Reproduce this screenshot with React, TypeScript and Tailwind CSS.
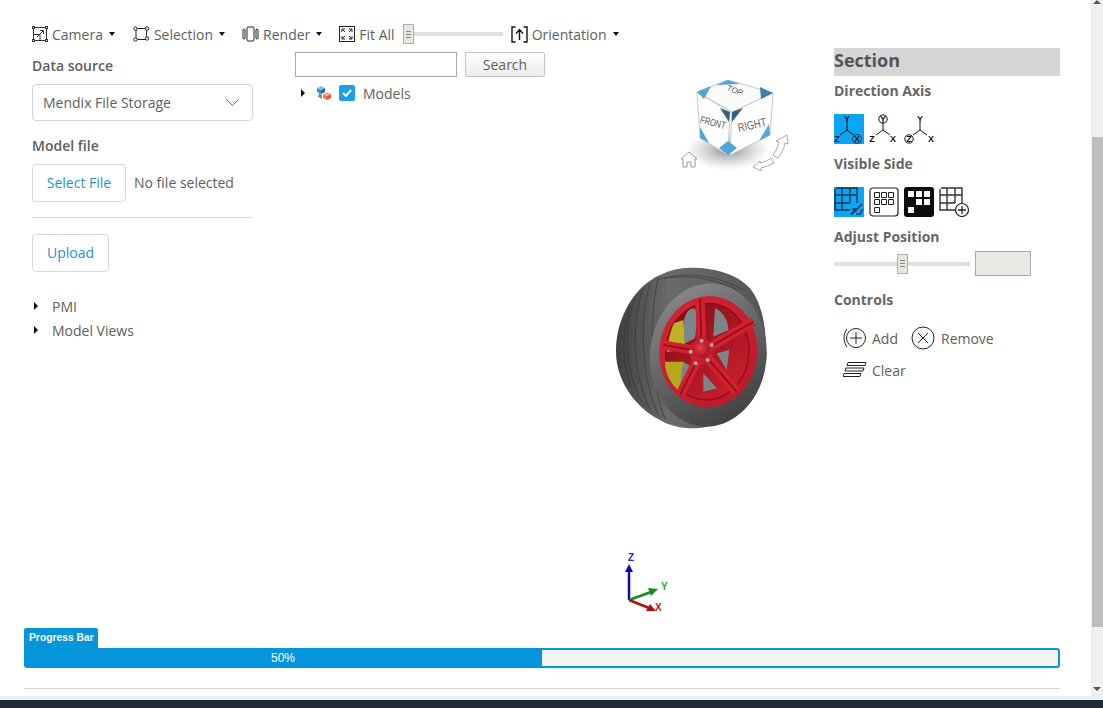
import type { ReactNode } from "react";

// Small black caret used by the toolbar menus
function Caret() {
  return <span className="ml-[6px] inline-block w-0 h-0 border-x-[3.500px] border-x-transparent border-t-[4px] border-t-[#111]" />;
}

function TreeArrow() {
  return <span className="inline-block w-0 h-0 border-y-[4px] border-y-transparent border-l-[4px] border-l-[#111]" />;
}

function ToolItem({ icon, label, caret, className }: { icon: ReactNode; label: string; caret?: boolean; className?: string }) {
  return (
    <div className={`flex items-center ${className ?? ""}`}>
      {icon}
      <span className="ml-[4px]">{label}</span>
      {caret && <Caret />}
    </div>
  );
}

function CameraIcon() {
  return (
    <svg width="16" height="16" viewBox="0 0 16 16" fill="none" stroke="#333" strokeWidth="1">
      <rect x="1.500" y="1.500" width="13" height="13" />
      <rect x="0.500" y="0.500" width="2" height="2" fill="#fff" />
      <rect x="13.500" y="0.500" width="2" height="2" fill="#fff" />
      <rect x="0.500" y="13.500" width="2" height="2" fill="#fff" />
      <rect x="13.500" y="13.500" width="2" height="2" fill="#fff" />
      <path d="M1.500 8.500h6.500v6M5 11l6-6M8 4.500h3.500v3.500" />
    </svg>
  );
}

function SelectionIcon() {
  return (
    <svg width="17" height="16" viewBox="0 0 17 16" fill="none" stroke="#222" strokeWidth="1">
      <path d="M3 2.500h11l-1 11H3z" />
      <circle cx="2.500" cy="2.500" r="1.700" fill="#fff" />
      <circle cx="14" cy="2.500" r="1.700" fill="#fff" />
      <circle cx="14" cy="12.500" r="1.700" fill="#fff" />
      <circle cx="2.500" cy="13.500" r="1.700" fill="#fff" />
    </svg>
  );
}

function RenderIcon() {
  return (
    <svg width="17" height="16" viewBox="0 0 17 16" fill="none" stroke="#222" strokeWidth="1">
      <rect x="5" y="1" width="7" height="14" rx="1" />
      <rect x="1" y="3" width="2" height="10" rx="1" />
      <rect x="14" y="3" width="2" height="10" rx="1" />
    </svg>
  );
}

function FitIcon() {
  return (
    <svg width="16" height="16" viewBox="0 0 16 16" fill="none" stroke="#222" strokeWidth="1">
      <rect x="0.500" y="0.500" width="15" height="15" />
      <path d="M3 6V3h3M3 3l3 3M10 3h3v3M13 3l-3 3M3 10v3h3M3 13l3-3M13 10v3h-3M13 13l-3-3" />
    </svg>
  );
}

function OrientationIcon() {
  return (
    <svg width="17" height="17" viewBox="0 0 17 17" fill="none" stroke="#111" strokeWidth="1.400">
      <path d="M4.500 1H1v15h3.500M12.500 1H16v15h-3.500M8.500 14V4M5 7.500l3.500-4 3.500 4" />
    </svg>
  );
}

function Handle({ className }: { className?: string }) {
  return (
    <div className={`absolute w-[11px] h-[20px] bg-[#e9e5df] border border-[#b5aea8] flex flex-col items-center justify-center gap-[2px] ${className ?? ""}`}>
      <span className="w-[5px] h-px bg-[#8a8a8a]" />
      <span className="w-[5px] h-px bg-[#8a8a8a]" />
      <span className="w-[5px] h-px bg-[#8a8a8a]" />
    </div>
  );
}

function AxisIcon({ active, mark }: { active?: boolean; mark: "x" | "y" | "z" }) {
  const ring = active ? "#1a3a55" : "#111";
  const cx = mark === "y" ? 14 : mark === "z" ? 16 : 13;
  const zx = mark === "z" ? 5 : 3;
  const xx = mark === "z" ? 27 : mark === "y" ? 24 : 23;
  return (
    <svg width="30" height="30" viewBox="0 0 30 30" className={active ? "bg-[#0aa5f5]" : ""} fontFamily="'Liberation Sans', sans-serif" fontSize="9" fontWeight="700" fill="#111">
      <path d={`M${cx} 8v8M${cx} 16l-7 5M${cx} 16l7 5`} stroke="#111" strokeWidth="1" fill="none" />
      {mark === "y" && <circle cx={cx} cy="5" r="4.200" fill="none" stroke={ring} strokeWidth="1" />}
      {mark === "z" && <circle cx={zx} cy="25" r="4.200" fill="none" stroke={ring} strokeWidth="1" />}
      {mark === "x" && <circle cx={xx} cy="25" r="4.500" fill="none" stroke={ring} strokeWidth="1" />}
      <text x={cx} y="8" textAnchor="middle">Y</text>
      <text x={zx} y="28" textAnchor="middle">Z</text>
      <text x={xx} y="28" textAnchor="middle">X</text>
    </svg>
  );
}

function GridBase({ stroke }: { stroke: string }) {
  return (
    <path d="M2 1h21v15M1 2v21h15M1 8h22M1 16h15M8 1v22M16 1v15" fill="none" stroke={stroke} strokeWidth="1.400" />
  );
}

function VisibleIcons() {
  return (
    <div className="flex gap-[5px] mt-[13px] h-[30px]">
      <svg width="30" height="30" viewBox="0 0 30 30" className="bg-[#0aa5f5]">
        <GridBase stroke="#12364f" />
        <path d="M17 28l11-11M18 22h4l-5 5M22 27h4l3-5" fill="none" stroke="#12364f" strokeWidth="1.400" />
      </svg>
      <svg width="30" height="30" viewBox="0 0 30 30" fill="none" stroke="#222">
        <rect x="1" y="1" width="28" height="28" rx="3" strokeWidth="1.200" />
        <path d="M5.500 5.500h5v5h-5zM12.500 5.500h5v5h-5zM19.500 5.500h5v5h-5zM5.500 12.500h5v5h-5zM12.500 12.500h5v5h-5zM19.500 12.500h5v5h-5zM5.500 20.500h5v5h-5z" strokeWidth="1" />
      </svg>
      <svg width="30" height="30" viewBox="0 0 30 30">
        <rect width="30" height="30" rx="3" fill="#0c0c0c" />
        <path d="M4 4h6v6H4zM12 4h6v6h-6zM20 4h6v6h-6zM12 12h6v6h-6zM20 12h6v6h-6zM4 20h6v6H4z" fill="#fff" />
      </svg>
      <svg width="31" height="30" viewBox="0 0 31 30">
        <GridBase stroke="#333" />
        <circle cx="23" cy="23" r="6.500" fill="#fff" stroke="#222" strokeWidth="1.200" />
        <path d="M23 19v8M19 23h8" stroke="#222" strokeWidth="1.300" />
      </svg>
    </div>
  );
}

function ViewCube() {
  return (
    <svg width="114" height="100" viewBox="0 0 114 100" className="absolute left-[385px] top-[28px]" fontFamily="'Liberation Sans', sans-serif">
      <defs>
        <radialGradient id="cubeShadow">
          <stop offset="0%" stopColor="#444" stopOpacity="0.600" />
          <stop offset="100%" stopColor="#888" stopOpacity="0" />
        </radialGradient>
      </defs>
      <ellipse cx="48" cy="74" rx="42" ry="20" fill="url(#cubeShadow)" />
      <path d="M17 16 48 4l45 13-41 19z" fill="#fafafa" stroke="#c8c8c8" />
      <path d="M17 16l33 20-2 43-28-17z" fill="#fff" stroke="#c8c8c8" />
      <path d="M52 36l41-19-3 42-40 20z" fill="#fff" stroke="#c8c8c8" />
      {/* blue corner tabs */}
      <path d="M17 16l14-6-7 13zM48 4l-12 5 24-1zM70 11l-10-3" fill="#4da6d6" />
      <path d="M93 17l-13-6 1 12z" fill="#3f7f9f" />
      <path d="M50 36l-10-4 9 14zM52 36l11-4-11 14z" fill="#37617b" />
      <path d="M20 62l0-11 9 16zM48 79l-9-7 9-7 9 7zM90 59l-1-11-10 17z" fill="#4da6d6" />
      <text x="55" y="17" fontSize="8" textAnchor="middle" fill="#555" transform="rotate(20 55 14)" fontStyle="italic">TOP</text>
      <text x="33" y="50" fontSize="10" textLength="26" lengthAdjust="spacingAndGlyphs" textAnchor="middle" fill="#555" transform="rotate(14 33 46)">FRONT</text>
      <text x="72" y="53" fontSize="12" textLength="29" lengthAdjust="spacingAndGlyphs" textAnchor="middle" fill="#666" transform="rotate(-12 72 49)">RIGHT</text>
      <path d="M9 76l8 7h-2v8h-4v-5H7v5H3v-8H1z" fill="#fff" stroke="#999" />
      <path d="M73 91l7-6v2c5-1 8-3 11-5l3 5c-4 2-9 4-13 5v3z" fill="#fff" stroke="#aaa" />
      <path d="M107 59l1 9-3-1c-1 6-4 11-7 15l-5-3c3-4 5-8 6-13l-3-1z" fill="#fff" stroke="#aaa" />
    </svg>
  );
}

// drawn in 3x coordinates, that is why the viewBox is so large
function Wheel() {
  const spokes: [number, number][] = [[300, 130], [460, 200], [410, 410], [240, 420], [190, 270]];
  return (
    <svg width="154" height="164" viewBox="48 36 462 492" className="absolute left-[321px] top-[219px]">
      <defs>
        <linearGradient id="tread" x1="0" x2="1" y1="0" y2="0">
          <stop offset="0%" stopColor="#3f3f3f" />
          <stop offset="35%" stopColor="#6a6a6a" />
          <stop offset="100%" stopColor="#555" />
        </linearGradient>
        <linearGradient id="side" x1="0.200" x2="0.800" y1="0" y2="1">
          <stop offset="0%" stopColor="#8a8a8a" />
          <stop offset="60%" stopColor="#5a5a5a" />
          <stop offset="100%" stopColor="#3e3e3e" />
        </linearGradient>
        <linearGradient id="lip" x1="0" x2="1" y1="0" y2="1">
          <stop offset="0%" stopColor="#d42536" />
          <stop offset="100%" stopColor="#b9182a" />
        </linearGradient>
        <linearGradient id="barrel" x1="0" x2="1" y1="0" y2="1">
          <stop offset="0%" stopColor="#7d0b17" />
          <stop offset="100%" stopColor="#d5202f" />
        </linearGradient>
        <radialGradient id="hub" cx="0.400" cy="0.350" r="0.700">
          <stop offset="0%" stopColor="#e8404c" />
          <stop offset="100%" stopColor="#a01020" />
        </radialGradient>
      </defs>
      <path d="M270 38C340 38 410 55 450 100C490 150 505 240 495 330C480 430 420 500 320 515C280 525 220 520 180 495C110 460 48 380 48 290C48 180 110 90 180 60C210 45 240 38 270 38Z" fill="url(#tread)" />
      <g stroke="#333" strokeWidth="2.500" fill="none" opacity="0.650">
        <path d="M110 120C70 200 70 340 125 440M130 100C95 190 95 350 150 465M150 85C120 180 120 360 175 480M90 155C65 230 65 320 95 400M175 68C150 170 145 370 195 492" />
        <path d="M170 75C250 50 340 55 430 105M190 70C260 60 330 65 410 105" />
      </g>
      <ellipse cx="325" cy="300" rx="175" ry="215" transform="rotate(5 325 300)" fill="url(#side)" />
      <ellipse cx="325" cy="290" rx="147" ry="167" transform="rotate(5 325 290)" fill="url(#lip)" />
      <ellipse cx="322" cy="290" rx="125" ry="145" transform="rotate(5 322 290)" fill="url(#barrel)" stroke="#8f0d1a" strokeWidth="4" />
      {/* openings between the spokes */}
      <path d="M262 170C285 150 295 160 292 200L285 250L250 268C250 230 245 200 262 170Z" fill="#7b868a" />
      <path d="M222 205L250 195L255 285L200 290C205 260 210 230 222 205Z" fill="#c1b224" />
      <path d="M195 320L250 320L240 410C215 390 195 360 195 320Z" fill="#b5a81f" />
      <path d="M250 320L275 335L250 420L238 410Z" fill="#7b868a" />
      <path d="M345 160C370 170 385 200 385 225L340 245Z" fill="#7b868a" />
      <path d="M350 295L388 285L380 345Z" fill="#7b868a" />
      <path d="M310 355L350 400L310 410Z" fill="#7b868a" />
      {spokes.map(([x, y]) => (
        <g key={`${x}-${y}`}>
          <path d={`M305 290L${x} ${y}`} stroke="#d12030" strokeWidth="28" />
          <path d={`M305 290L${x} ${y}`} stroke="#8f0e1a" strokeWidth="5" />
        </g>
      ))}
      <ellipse cx="305" cy="290" rx="36" ry="40" fill="#c81d2c" />
      <ellipse cx="305" cy="285" rx="22" ry="24" fill="url(#hub)" />
      <g fill="#a8a8a8">
        <circle cx="305" cy="257" r="6" />
        <circle cx="335" cy="270" r="6" />
        <circle cx="272" cy="290" r="6" />
        <circle cx="287" cy="325" r="6" />
        <circle cx="323" cy="315" r="6" />
      </g>
    </svg>
  );
}

function AxisTriad() {
  return (
    <svg width="50" height="66" viewBox="0 0 50 66" className="absolute left-[325px] top-[502px]" fontFamily="'Liberation Sans', sans-serif" fontSize="10">
      <path d="M9 50V20" stroke="#0b0ba8" strokeWidth="2.500" />
      <path d="M5 22l4-8 4 8z" fill="#0b0ba8" />
      <path d="M9 50l22-8" stroke="#129012" strokeWidth="2.500" />
      <path d="M28 38l10 1-7 7z" fill="#129012" />
      <path d="M9 50l20 8" stroke="#b01010" strokeWidth="2.500" />
      <path d="M30 54l6 7-10 0z" fill="#b01010" />
      <text x="11" y="11" fill="#2a2ab5" textAnchor="middle" fontWeight="700">Z</text>
      <text x="41" y="40" fill="#22a52a" fontWeight="700">Y</text>
      <text x="35" y="61" fill="#c42020" fontWeight="700">X</text>
    </svg>
  );
}

function TreeCubes() {
  return (
    <svg width="17" height="16" viewBox="0 0 17 16">
      <path d="M6 1l4 2-4 2-4-2z" fill="#7fc4e8" />
      <path d="M2 3l4 2v4L2 7z" fill="#2c93cf" />
      <path d="M10 3L6 5v4l4-2z" fill="#1a6f9f" />
      <path d="M4 8l3 2v4l-4-2z" fill="#888" />
      <path d="M12 7l4 2-4 2-4-2z" fill="#f7b08c" />
      <path d="M8 9l4 2v4l-4-2z" fill="#ee7a45" />
      <path d="M16 9l-4 2v4l4-2z" fill="#d85d2a" />
    </svg>
  );
}

export default function App() {
  return (
    <div className="h-[708px] w-[1103px] overflow-hidden flex flex-col bg-white font-['Open_Sans',sans-serif] text-[14px] text-[#606060]">
      <div className="flex h-[696px] min-h-0">
        <div className="w-[1091px] flex flex-col">
          {/* Toolbar */}
          <div className="flex items-center h-[20px] mt-[24px] pl-[32px]">
            <ToolItem icon={<CameraIcon />} label="Camera" caret />
            <ToolItem icon={<SelectionIcon />} label="Selection" caret className="ml-[18px]" />
            <ToolItem icon={<RenderIcon />} label="Render" caret className="ml-[17px]" />
            <ToolItem icon={<FitIcon />} label="Fit All" className="ml-[17px]" />
            <div className="relative w-[100px] h-[20px] ml-[8px] flex items-center">
              <div className="w-full h-[4px] bg-[#e3dfd9]" />
              <Handle className="left-0 top-0" />
            </div>
            <ToolItem icon={<OrientationIcon />} label="Orientation" caret className="ml-[8px]" />
          </div>

          <div className="flex h-[580px] mt-[4px] pl-[32px] pr-[31px]">
            {/* Left column */}
            <div className="w-[221px] shrink-0">
              <div className="font-semibold leading-[20px] mt-[8px]">Data source</div>
              <div className="mt-[8px] h-[37px] border border-[#d4d4d4] rounded-[4px] flex items-center justify-between pl-[10px] pr-[13px]">
                <span>Mendix File Storage</span>
                <svg width="13" height="7" viewBox="0 0 13 7" fill="none" stroke="#666"><path d="M.5.500l6 6 6-6" /></svg>
              </div>
              <div className="font-semibold leading-[20px] mt-[15px]">Model file</div>
              <div className="flex items-center mt-[8px]">
                <button className="h-[38px] w-[94px] border border-[#d9d9d9] rounded-[4px] text-[#1b95d3] pb-[2px]">Select File</button>
                <span className="ml-[8px] pb-[2px]">No file selected</span>
              </div>
              <div className="h-px bg-[#d9d9d9] mt-[15px]" />
              <button className="h-[38px] w-[77px] border border-[#d9d9d9] rounded-[4px] text-[#1b95d3] mt-[16px] block pb-[2px]">Upload</button>
              <div className="flex items-center mt-[24px] h-[20px] pl-[2px]">
                <TreeArrow />
                <span className="ml-[14px]">PMI</span>
              </div>
              <div className="flex items-center mt-[4px] h-[20px] pl-[2px]">
                <TreeArrow />
                <span className="ml-[14px]">Model Views</span>
              </div>
            </div>

            {/* Viewer */}
            <div className="relative w-[539px] ml-[42px] shrink-0">
              <div className="flex mt-[4px]">
                <input className="w-[162px] h-[25px] border border-[#aaa] bg-white" />
                <button className="ml-[8px] w-[80px] h-[25px] border border-[#c4c4c4] rounded-[2px] bg-gradient-to-b from-white to-[#ececec]">Search</button>
              </div>
              <div className="flex items-center h-[20px] mt-[6px] pl-[6px]">
                <TreeArrow />
                <span className="ml-[10px]"><TreeCubes /></span>
                <span className="ml-[7px] w-[16px] h-[16px] rounded-[2px] bg-[#1a9fe8] flex items-center justify-center">
                  <svg width="10" height="8" viewBox="0 0 10 8" fill="none" stroke="#fff" strokeWidth="2"><path d="M1 4l3 3 5-6" /></svg>
                </span>
                <span className="ml-[8px]">Models</span>
              </div>
              <ViewCube />
              <Wheel />
              <AxisTriad />
            </div>

            {/* Section panel */}
            <div className="w-[226px] shrink-0">
              <div className="h-[28px] bg-[#d6d6d6] text-[18px] font-bold leading-[24px] text-[#555]">Section</div>
              <div className="font-bold leading-[20px] mt-[5px] text-[#666]">Direction Axis</div>
              <div className="flex gap-[5px] mt-[13px]">
                <AxisIcon active mark="x" />
                <AxisIcon mark="y" />
                <AxisIcon mark="z" />
              </div>
              <div className="font-bold leading-[20px] mt-[10px] text-[#666]">Visible Side</div>
              <VisibleIcons />
              <div className="font-bold leading-[20px] mt-[10px] text-[#666]">Adjust Position</div>
              <div className="flex items-center mt-[4px]">
                <div className="relative w-[136px] h-[20px] flex items-center">
                  <div className="w-full h-[4px] bg-[#e3dfd9]" />
                  <Handle className="left-[63px] top-0" />
                </div>
                <div className="ml-[5px] w-[56px] h-[25px] bg-[#e9e8e4] border border-[#aaa]" />
              </div>
              <div className="font-bold leading-[20px] mt-[14px] text-[#666]">Controls</div>
              <div className="flex items-center mt-[16px] pl-[9px] h-[24px]">
                <svg width="25" height="24" viewBox="0 0 25 24" fill="none" stroke="#222">
                  <path d="M4 3C0 8 0 16 4 21" />
                  <circle cx="13" cy="12" r="9.500" />
                  <path d="M13 6v12M7 12h12" />
                </svg>
                <span className="ml-[4px]">Add</span>
                <svg width="24" height="24" viewBox="0 0 24 24" fill="none" stroke="#222" className="ml-[13px]">
                  <circle cx="12" cy="12" r="11" />
                  <path d="M7 7l10 10M17 7L7 17" />
                </svg>
                <span className="ml-[6px]">Remove</span>
              </div>
              <div className="flex items-center mt-[8px] pl-[9px] h-[24px]">
                <svg width="24" height="18" viewBox="0 0 24 18" fill="none" stroke="#222">
                  <path d="M5 1.500h18l-1 3H4zM3 7h18l-1 3H2zM1 12.500h17l-1 3H0z" />
                </svg>
                <span className="ml-[5px]">Clear</span>
              </div>
            </div>
          </div>

          {/* Progress bar */}
          <div className="pl-[24px] pr-[31px] font-['Liberation_Sans',sans-serif]">
            <div className="w-[74px] h-[20px] bg-[#0595db] rounded-t-[2px] text-white text-[10.300px] font-bold leading-[20px] pl-[5px] whitespace-nowrap">Progress Bar</div>
            <div className="h-[20px] border-2 border-[#0595db] rounded-b-[3px] rounded-tr-[3px] bg-[#f4f4f4] flex">
              <div className="w-[516px] h-full bg-[#0595db] text-white text-[12px] leading-[16px] text-center pr-[2px]">50%</div>
            </div>
            <div className="h-px bg-[#d5d5d5] mt-[20px]" />
          </div>
        </div>

        {/* Scrollbar */}
        <div className="w-[12px] bg-[#f0f0f0] flex flex-col items-center justify-between relative">
          <span className="w-0 h-0 border-x-[4px] border-x-transparent border-b-[4px] border-b-[#555]" />
          <div className="absolute left-[1px] right-0 top-[137px] h-[490px] bg-[#bdbdbd]" />
          <span className="w-0 h-0 border-x-[4px] border-x-transparent border-t-[4px] border-t-[#555] mb-[5px]" />
        </div>
      </div>
      <div className="h-[4px] bg-[#eef0f2]" />
      <div className="h-[8px] bg-[#1f2937]" />
    </div>
  );
}
